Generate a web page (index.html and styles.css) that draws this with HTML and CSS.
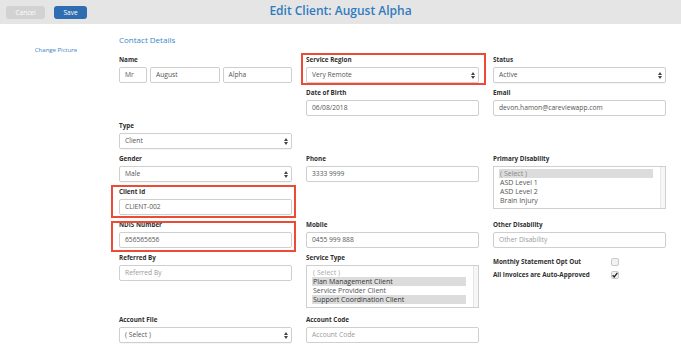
FILE: index.html
```html
<!DOCTYPE html>
<html>
<head>
<meta charset="utf-8">
<title>Edit Client</title>
<link rel="stylesheet" href="styles.css">
</head>
<body>
<header class="topbar">
  <div class="actions">
    <button class="btn btn-cancel">Cancel</button>
    <button class="btn btn-save">Save</button>
  </div>
  <h1 class="title">Edit Client: August Alpha</h1>
  <div></div>
</header>
<div class="page">
  <aside class="sidebar"><a class="change-pic">Change Picture</a></aside>
  <main class="content">
    <h2 class="section">Contact Details</h2>
    <div class="form">
      <!-- row 1 -->
      <div class="field c1 r1">
        <div class="label">Name</div>
        <div class="name-row">
          <div class="input w-title">Mr</div>
          <div class="input">August</div>
          <div class="input">Alpha</div>
        </div>
      </div>
      <div class="field c2 r1 mark mark-region">
        <div class="label">Service Region</div>
        <div class="input select">Very Remote<svg class="arrows" width="4" height="7" viewBox="0 0 4 7"><path d="M0 3L2 0L4 3Z M0 4L4 4L2 7Z" fill="#444"/></svg></div>
      </div>
      <div class="field c3 r1">
        <div class="label">Status</div>
        <div class="input select">Active<svg class="arrows" width="4" height="7" viewBox="0 0 4 7"><path d="M0 3L2 0L4 3Z M0 4L4 4L2 7Z" fill="#444"/></svg></div>
      </div>
      <!-- row 2 -->
      <div class="field c2 r2">
        <div class="label">Date of Birth</div>
        <div class="input">06/08/2018</div>
      </div>
      <div class="field c3 r2">
        <div class="label">Email</div>
        <div class="input">devon.hamon@careviewapp.com</div>
      </div>
      <!-- row 3 -->
      <div class="field c1 r3">
        <div class="label">Type</div>
        <div class="input select">Client<svg class="arrows" width="4" height="7" viewBox="0 0 4 7"><path d="M0 3L2 0L4 3Z M0 4L4 4L2 7Z" fill="#444"/></svg></div>
      </div>
      <!-- row 4 -->
      <div class="field c1 r4">
        <div class="label">Gender</div>
        <div class="input select">Male<svg class="arrows" width="4" height="7" viewBox="0 0 4 7"><path d="M0 3L2 0L4 3Z M0 4L4 4L2 7Z" fill="#444"/></svg></div>
      </div>
      <div class="field c2 r4">
        <div class="label">Phone</div>
        <div class="input">3333 9999</div>
      </div>
      <div class="field c3 r4 span2">
        <div class="label">Primary Disability</div>
        <div class="listbox">
          <div class="items">
            <div class="item sel muted">( Select )</div>
            <div class="item">ASD Level 1</div>
            <div class="item">ASD Level 2</div>
            <div class="item">Brain Injury</div>
          </div>
          <div class="track"></div>
        </div>
      </div>
      <!-- row 5 -->
      <div class="field c1 r5 mark mark-id">
        <div class="label">Client Id</div>
        <div class="input">CLIENT-002</div>
      </div>
      <!-- row 6 -->
      <div class="field c1 r6 mark mark-ndis">
        <div class="label">NDIS Number</div>
        <div class="input">656565656</div>
      </div>
      <div class="field c2 r6">
        <div class="label">Mobile</div>
        <div class="input">0455 999 888</div>
      </div>
      <div class="field c3 r6">
        <div class="label">Other Disability</div>
        <div class="input ph">Other Disability</div>
      </div>
      <!-- row 7 -->
      <div class="field c1 r7">
        <div class="label">Referred By</div>
        <div class="input ph">Referred By</div>
      </div>
      <div class="field c2 r7 tall">
        <div class="label">Service Type</div>
        <div class="listbox">
          <div class="items">
            <div class="item faint">( Select )</div>
            <div class="item sel dark">Plan Management Client</div>
            <div class="item">Service Provider Client</div>
            <div class="item sel dark">Support Coordination Client</div>
          </div>
          <div class="track"></div>
        </div>
      </div>
      <div class="field c3 r7 checks">
        <div class="check-row">
          <span class="check-label">Monthly Statement Opt Out</span>
          <span class="checkbox"></span>
        </div>
        <div class="check-row">
          <span class="check-label">All Invoices are Auto-Approved</span>
          <span class="checkbox checked"><svg width="6" height="6" viewBox="0 0 6 6"><path d="M0.6 3.2L2.2 4.9L5.4 0.8" fill="none" stroke="#222" stroke-width="1.3"/></svg></span>
        </div>
      </div>
      <!-- row 8 -->
      <div class="field c1 r8">
        <div class="label">Account File</div>
        <div class="input select">( Select )<svg class="arrows" width="4" height="7" viewBox="0 0 4 7"><path d="M0 3L2 0L4 3Z M0 4L4 4L2 7Z" fill="#444"/></svg></div>
      </div>
      <div class="field c2 r8">
        <div class="label">Account Code</div>
        <div class="input ph">Account Code</div>
      </div>
    </div>
  </main>
</div>
</body>
</html>
```

FILE: styles.css
```css
* { box-sizing: border-box; }
html, body { margin: 0; padding: 0; background: #fff; }
body {
  font-family: "Open Sans", "Liberation Sans", sans-serif;
  color: #333;
  width: 681px;
  height: 347px;
  overflow: hidden;
}
.topbar {
  height: 24px;
  background: #e5e5e5;
  display: grid;
  grid-template-columns: 1fr auto 1fr;
  align-items: center;
}
.actions { display: flex; gap: 9px; padding-left: 6px; }
.btn {
  border: none;
  border-radius: 3px;
  color: #fff;
  font-family: "Open Sans", sans-serif;
  font-size: 6.5px;
  height: 13px;
  padding: 0;
  line-height: 13px;
}
.btn-cancel { width: 39px; background: #d2d2d2; }
.btn-save { width: 33px; background: #2f6db1; }
.title {
  margin: 0;
  font-size: 12px;
  font-weight: 600;
  color: #2f7bc0;
  line-height: 16px;
  padding-bottom: 2px;
}
.page { display: flex; }
.sidebar {
  width: 119px;
  padding: 21px 7px 0 0;
  text-align: center;
  font-size: 6px;
  line-height: 10px;
}
.change-pic {
  display: block;
  font-size: 6px;
  color: #3b82c4;
  line-height: 10px;
}
.content { width: 547px; }
.section {
  margin: 10px 0 9px;
  font-size: 8px;
  font-weight: 400;
  color: #3a86c8;
  line-height: 12px;
}
.form {
  display: grid;
  grid-template-columns: repeat(3, 173px);
  column-gap: 14px;
  grid-template-rows: repeat(6, 33px) auto auto;
}
.c1 { grid-column: 1; }
.c2 { grid-column: 2; }
.c3 { grid-column: 3; }
.r1 { grid-row: 1; } .r2 { grid-row: 2; } .r3 { grid-row: 3; } .r4 { grid-row: 4; }
.r5 { grid-row: 5; } .r6 { grid-row: 6; } .r7 { grid-row: 7; } .r8 { grid-row: 8; }
.span2 { grid-row: 4 / span 2; }
.field { position: relative; padding-bottom: 5px; }
.field.tall { padding-bottom: 7px; }
.label {
  font-size: 6.3px;
  font-weight: 700;
  line-height: 10px;
  height: 10px;
  margin-bottom: 2px;
  color: #2f2f2f;
}
.input {
  height: 16px;
  border: 1px solid #cfcfcf;
  border-radius: 2px;
  padding: 0 5px;
  font-size: 6.7px;
  line-height: 14px;
  color: #555;
  background: #fff;
  white-space: nowrap;
  overflow: hidden;
}
.input.ph { color: #9a9a9a; }
.select {
  display: flex;
  align-items: center;
  justify-content: space-between;
  padding-right: 3px;
  box-shadow: 0 1px 1px rgba(0,0,0,0.04);
}
.arrows { flex: none; }
.name-row { display: flex; gap: 3px; }
.name-row .input { flex: 1; }
.name-row .w-title { flex: none; width: 28px; }
.listbox {
  height: 43px;
  border: 1px solid #cfcfcf;
  display: flex;
  background: #fff;
}
.items { flex: 1; padding: 2px 7px 0 5px; }
.item {
  font-size: 7px;
  line-height: 9px;
  height: 9px;
  color: #555;
  padding-left: 1px;
  white-space: nowrap;
}
.item.sel { background: #dcdcdc; }
.item.muted { color: #888; }
.item.faint { color: #aaa; }
.item.dark { color: #333; }
.track {
  width: 5px;
  background: #f6f6f6;
  border-left: 1px solid #e6e6e6;
}
.checks { padding-top: 2px; }
.check-row {
  display: flex;
  align-items: center;
  height: 13px;
}
.check-label {
  width: 118px;
  font-size: 6.3px;
  font-weight: 700;
  color: #2f2f2f;
}
.checkbox {
  width: 8px;
  height: 8px;
  border: 1px solid #c8c8c8;
  border-radius: 2px;
  background: #f2f2f2;
  display: flex;
  align-items: center;
  justify-content: center;
}
.mark::after {
  content: "";
  position: absolute;
  border: 2px solid #ec4b36;
  pointer-events: none;
}
.mark-region::after { top: -2px; bottom: 3px; left: -5px; right: -7px; }
.mark-id::after { top: -2px; bottom: 2px; left: -8px; right: -4px; }
.mark-ndis::after { top: 1px; bottom: 1px; left: -8px; right: -4px; }
```
